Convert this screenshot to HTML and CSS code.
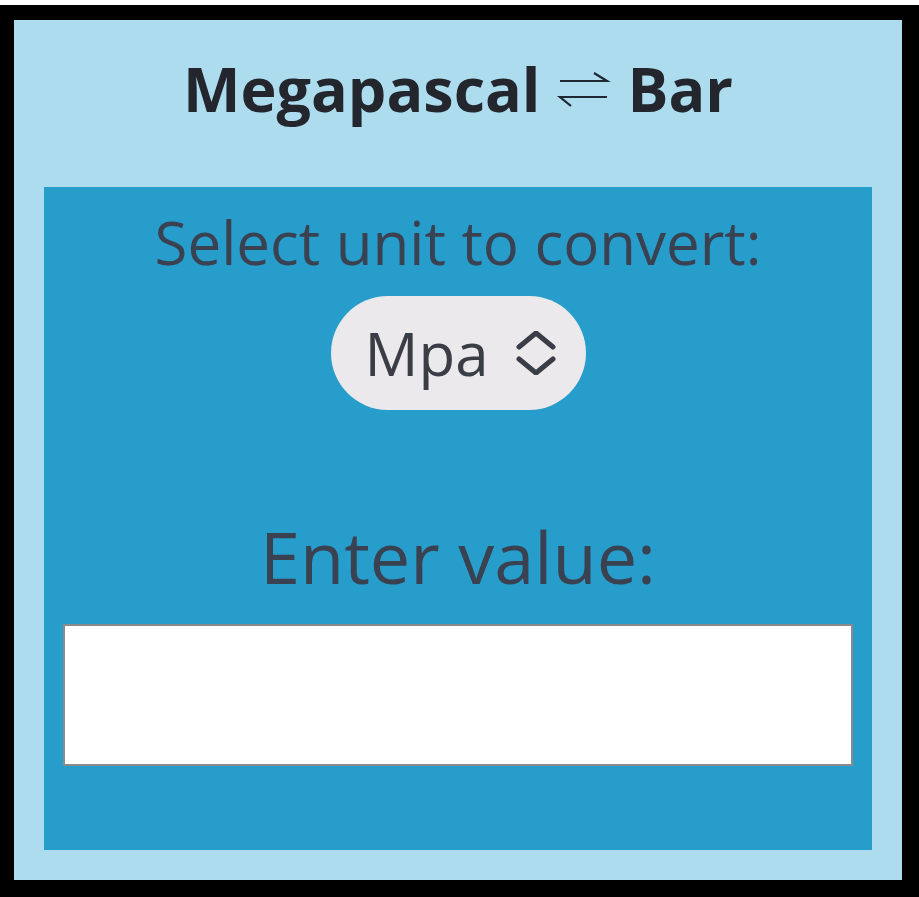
FILE: index.html
```html
<!DOCTYPE html>
<html lang="en">
<head>
    <meta charset="UTF-8">
    <meta name="viewport" content="width=device-width, initial-scale=1.0">
    <title>Megapascal ⇌ Bar</title>
    <link rel="stylesheet" href="styles.css">
</head>
<body>
    <div class="frame">
        <div class="converter">
            <h1 class="title">Megapascal<svg class="swap" width="67" height="36" viewBox="0 0 67 36" role="img" aria-label="⇌">
                    <polyline points="10,9 57,9 44,1" fill="none" stroke="#1f2733" stroke-width="2.2"/>
                    <polyline points="57,25 10,25 21,34" fill="none" stroke="#1f2733" stroke-width="2.2"/>
                </svg>Bar</h1>
            <div class="panel">
                <label class="label" for="unit">Select unit to convert:</label>
                <div class="unit-select">
                    <select id="unit">
                        <option value="mpa">Mpa</option>
                        <option value="bar">Bar</option>
                    </select>
                    <svg class="chevrons" width="40" height="44" viewBox="0 0 40 44">
                        <polyline points="3,16 20,2 37,16" fill="none" stroke="#3a3d45" stroke-width="5" stroke-linecap="round" stroke-linejoin="round"/>
                        <polyline points="3,28 20,42 37,28" fill="none" stroke="#3a3d45" stroke-width="5" stroke-linecap="round" stroke-linejoin="round"/>
                    </svg>
                </div>
                <label class="label label-big" for="value">Enter value:</label>
                <input type="text" id="value" class="value-input">
            </div>
        </div>
    </div>
</body>
</html>
```

FILE: styles.css
```css
body, html {
    margin: 0;
    padding: 0;
    background-color: #fff;
    font-family: "Open Sans", "Noto Sans", sans-serif;
}
body {
    padding-top: 5px;
}
.frame {
    background-color: #000;
    padding: 15px 17px 17px 14px;
}
.converter {
    background-color: #addcef;
    height: 860px;
    box-sizing: border-box;
    padding: 0 30px 30px 30px;
    display: flex;
    flex-direction: column;
}
.title {
    margin: 0;
    height: 167px;
    box-sizing: border-box;
    padding-top: 29px;
    line-height: 80px;
    text-align: center;
    font-size: 61px;
    font-weight: 700;
    color: #23262d;
}
.swap {
    vertical-align: 4px;
    margin: 0 10px;
}
.panel {
    flex: 1;
    background-color: #279dcc;
    display: flex;
    flex-direction: column;
    align-items: center;
    padding: 0 19px;
}
.label {
    color: #3a4150;
    font-size: 60px;
    margin-top: 15px;
    line-height: 80px;
}
.label-big {
    font-size: 72px;
    margin-top: 101px;
    line-height: 90px;
}
.unit-select {
    margin-top: 14px;
    width: 255px;
    height: 114px;
    box-sizing: border-box;
    background-color: #ebe9eb;
    border-radius: 57px;
    display: flex;
    align-items: center;
    justify-content: center;
    gap: 26px;
    padding-left: 4px;
}
.unit-select select {
    appearance: none;
    border: none;
    background: transparent;
    font-family: inherit;
    font-size: 60px;
    color: #3a3d45;
    padding: 0;
    outline: none;
}
.value-input {
    margin-top: 23px;
    width: 100%;
    height: 142px;
    box-sizing: border-box;
    border: 2px solid #8a8a8a;
    background-color: #fff;
    font-size: 40px;
}
```
